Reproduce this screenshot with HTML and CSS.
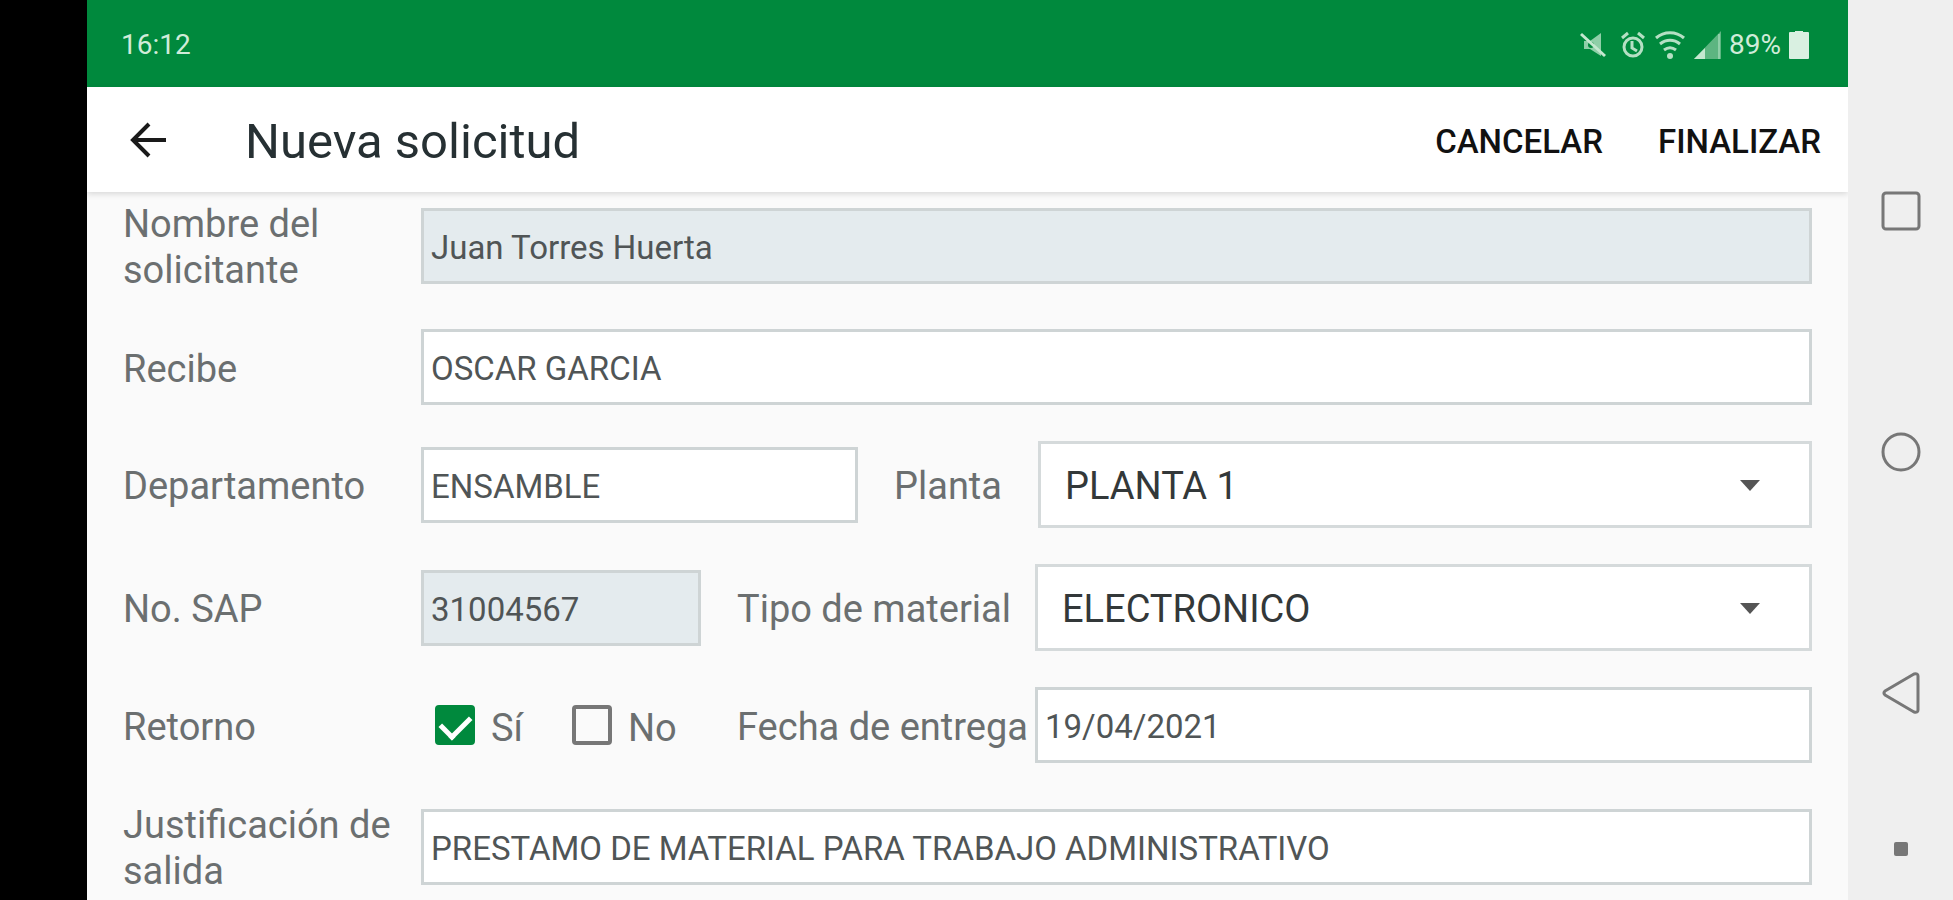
FILE: index.html
```html
<!DOCTYPE html>
<html lang="es">
<head>
    <meta charset="UTF-8">
    <meta name="viewport" content="width=device-width, initial-scale=1.0">
    <title>Nueva solicitud</title>
    <link rel="stylesheet" href="styles.css">
</head>
<body>
    <main class="app">
        <div class="status-bar">
            <span class="status-time">16:12</span>
            <div class="status-icons">
                <svg class="icon-mute" width="26" height="28" viewBox="0 0 26 28">
                    <path d="M4 10h6l11-8v23l-11-7H4z" fill="#8fcfa8"/>
                    <circle cx="11" cy="14" r="3" fill="#00893d"/>
                    <path d="M1 3l24 22" stroke="#c5e8d0" stroke-width="3" fill="none"/>
                </svg>
                <svg class="icon-alarm" width="26" height="28" viewBox="0 0 26 28" fill="none" stroke="#b5e0c4" stroke-width="3">
                    <circle cx="13" cy="16" r="9"/>
                    <path d="M2 7l6-5M24 7l-6-5M12 10v7l5 3"/>
                </svg>
                <svg class="icon-wifi" width="32" height="30" viewBox="0 0 32 30" fill="none" stroke="#b5e0c4" stroke-width="3">
                    <path d="M2 8c8-7 20-7 28 0M6 14c6-5 14-5 20 0M10 20c4-3 8-3 12 0"/>
                    <circle cx="16" cy="26" r="3" fill="#b5e0c4" stroke="none"/>
                </svg>
                <svg class="icon-signal" width="27" height="28" viewBox="0 0 27 28">
                    <path d="M0 28L27 0v28z" fill="#5db581"/>
                    <path d="M0 28L11 17v11z" fill="#c5e8d0"/>
                    <path d="M25 3v25" stroke="#8fcfa8" stroke-width="2"/>
                </svg>
                <span class="battery-level">89%</span>
                <svg class="icon-battery" width="20" height="28" viewBox="0 0 20 28">
                    <path d="M1 1h5V0h8v1h5q1 0 1 1v25q0 1-1 1H1q-1 0-1-1V2q0-1 1-1z" fill="#d9f0e1"/>
                </svg>
            </div>
        </div>

        <header class="toolbar">
            <button type="button" class="back-button" aria-label="Volver">
                <svg width="38" height="36" viewBox="0 0 38 36" fill="none" stroke="#1a1a1a" stroke-width="4">
                    <path d="M37 18H4M20 2L4 18l16 16"/>
                </svg>
            </button>
            <h1>Nueva solicitud</h1>
            <button type="button" class="action-button">CANCELAR</button>
            <button type="submit" form="solicitud" class="action-button">FINALIZAR</button>
        </header>

        <form class="form" id="solicitud">
            <div class="row">
                <label class="label" for="nombre">Nombre del solicitante</label>
                <input class="field" type="text" id="nombre" value="Juan Torres Huerta" readonly>
            </div>
            <div class="row">
                <label class="label" for="recibe">Recibe</label>
                <input class="field" type="text" id="recibe" value="OSCAR GARCIA">
            </div>
            <div class="row">
                <label class="label" for="departamento">Departamento</label>
                <input class="field field-medium" type="text" id="departamento" value="ENSAMBLE">
                <label class="label label-short" for="planta">Planta</label>
                <div class="select-box">
                    <select class="select" id="planta">
                        <option>PLANTA 1</option>
                    </select>
                    <svg class="select-arrow" width="20" height="11" viewBox="0 0 20 11"><path d="M0 0h20L10 11z" fill="#555"/></svg>
                </div>
            </div>
            <div class="row">
                <label class="label" for="sap">No. SAP</label>
                <input class="field field-small" type="text" id="sap" value="31004567" readonly>
                <label class="label" for="tipo">Tipo de material</label>
                <div class="select-box">
                    <select class="select" id="tipo">
                        <option>ELECTRONICO</option>
                    </select>
                    <svg class="select-arrow" width="20" height="11" viewBox="0 0 20 11"><path d="M0 0h20L10 11z" fill="#555"/></svg>
                </div>
            </div>
            <div class="row">
                <span class="label" id="retorno">Retorno</span>
                <div class="checks" role="group" aria-labelledby="retorno">
                    <label class="check"><input type="checkbox" checked><span>Sí</span></label>
                    <label class="check"><input type="checkbox"><span>No</span></label>
                </div>
                <label class="label" for="fecha">Fecha de entrega</label>
                <input class="field" type="text" id="fecha" value="19/04/2021">
            </div>
            <div class="row">
                <label class="label" for="justificacion">Justificación de salida</label>
                <input class="field" type="text" id="justificacion" value="PRESTAMO DE MATERIAL PARA TRABAJO ADMINISTRATIVO">
            </div>
        </form>
    </main>

    <nav class="nav-bar">
        <div class="nav-buttons">
            <button type="button" aria-label="Recientes">
                <svg width="42" height="42" viewBox="0 0 42 42" fill="none" stroke="#777" stroke-width="3"><rect x="3" y="3" width="36" height="36" rx="3"/></svg>
            </button>
            <button type="button" aria-label="Inicio">
                <svg width="42" height="42" viewBox="0 0 42 42" fill="none" stroke="#777" stroke-width="3"><circle cx="21" cy="21" r="18"/></svg>
            </button>
            <button type="button" aria-label="Atrás">
                <svg width="42" height="42" viewBox="0 0 42 42" fill="none" stroke="#777" stroke-width="3" stroke-linejoin="round"><path d="M5 19L34 2q4-1 4 2v34q0 3-4 2L5 23q-2-2 0-4z"/></svg>
            </button>
        </div>
        <span class="nav-dot"></span>
    </nav>
</body>
</html>
```
FILE: styles.css
```css
* {
    box-sizing: border-box;
}
body {
    margin: 0;
    min-height: 100vh;
    display: flex;
    padding-left: 87px;
    background: #000;
    font-family: Roboto, "Liberation Sans", sans-serif;
}
button, input, select {
    font-family: inherit;
    margin: 0;
}
button {
    padding: 0;
    border: none;
    background: none;
    cursor: pointer;
}
svg {
    display: block;
}
.app {
    flex: 1;
    min-width: 0;
    background: #fafafa;
}
/* Barra de estado */
.status-bar {
    height: 87px;
    padding: 2px 39px 0 34px;
    display: flex;
    align-items: center;
    justify-content: space-between;
    background: #00893d;
    color: #d0ecd9;
    font-size: 28px;
}
.status-icons {
    display: flex;
    align-items: center;
    gap: 8px;
}
.icon-mute {
    margin-right: 6px;
}
/* Cabecera */
.toolbar {
    height: 105px;
    padding: 0 27px 0 42px;
    display: flex;
    align-items: center;
    background: #fff;
    box-shadow: 0 2px 6px rgba(0, 0, 0, 0.14);
}
.toolbar h1 {
    flex: 1;
    margin: 0 0 0 78px;
    padding-top: 5px;
    color: #263033;
    font-size: 49px;
    line-height: 56px;
    font-weight: 400;
}
.action-button {
    margin-left: 55px;
    padding-top: 4px;
    color: #111;
    font-size: 33px;
    font-weight: 500;
}
/* Formulario */
.form {
    padding: 6px 36px 10px;
    display: flex;
    flex-direction: column;
    gap: 36px;
}
.row {
    display: flex;
    align-items: center;
}
.label {
    flex: 0 0 298px;
    padding-top: 3px;
    color: #6b6f70;
    font-size: 38px;
    line-height: 46px;
}
.label-short {
    flex-basis: 144px;
}
.field {
    flex: 1;
    min-width: 0;
    height: 76px;
    padding: 3px 7px 0;
    border: 3px solid #ced4d5;
    border-radius: 0;
    background: #fff;
    color: #505556;
    font-size: 33px;
    outline: none;
}
.field:read-only {
    background: #e4ebee;
}
.field-medium {
    flex: 0 0 437px;
    margin-right: 36px;
}
.field-small {
    flex: 0 0 280px;
    margin-right: 36px;
}
.select-box {
    position: relative;
    flex: 1;
}
.select {
    display: block;
    width: 100%;
    height: 87px;
    padding: 3px 80px 0 24px;
    border: 3px solid #d5dadb;
    border-radius: 0;
    background: #fff;
    color: #333839;
    font-size: 38px;
    appearance: none;
    outline: none;
}
.select-arrow {
    position: absolute;
    top: 39px;
    right: 52px;
    pointer-events: none;
}
.checks {
    flex: 0 0 280px;
    height: 76px;
    margin-right: 36px;
    padding-left: 14px;
    display: flex;
    align-items: center;
    gap: 49px;
}
.check {
    display: flex;
    align-items: center;
    gap: 16px;
    color: #6b6f70;
    font-size: 38px;
    line-height: 46px;
}
.check span {
    padding-top: 6px;
}
.check input {
    width: 40px;
    height: 40px;
    border: 4px solid #777;
    border-radius: 4px;
    appearance: none;
}
.check input:checked {
    border-color: #00893d;
    background: #00893d;
    display: flex;
    justify-content: center;
}
.check input:checked::before {
    content: "";
    width: 14px;
    height: 24px;
    border: solid #fff;
    border-width: 0 5px 5px 0;
    transform: rotate(45deg);
}
/* Barra de navegación del sistema */
.nav-bar {
    flex: 0 0 105px;
    padding: 91px 0 48px;
    display: flex;
    flex-direction: column;
    align-items: center;
    background: #efefef;
}
.nav-buttons {
    flex: 1;
    margin-bottom: 29px;
    display: flex;
    flex-direction: column;
    justify-content: space-around;
}
.nav-dot {
    width: 14px;
    height: 14px;
    border-radius: 2px;
    background: #777;
}
```
